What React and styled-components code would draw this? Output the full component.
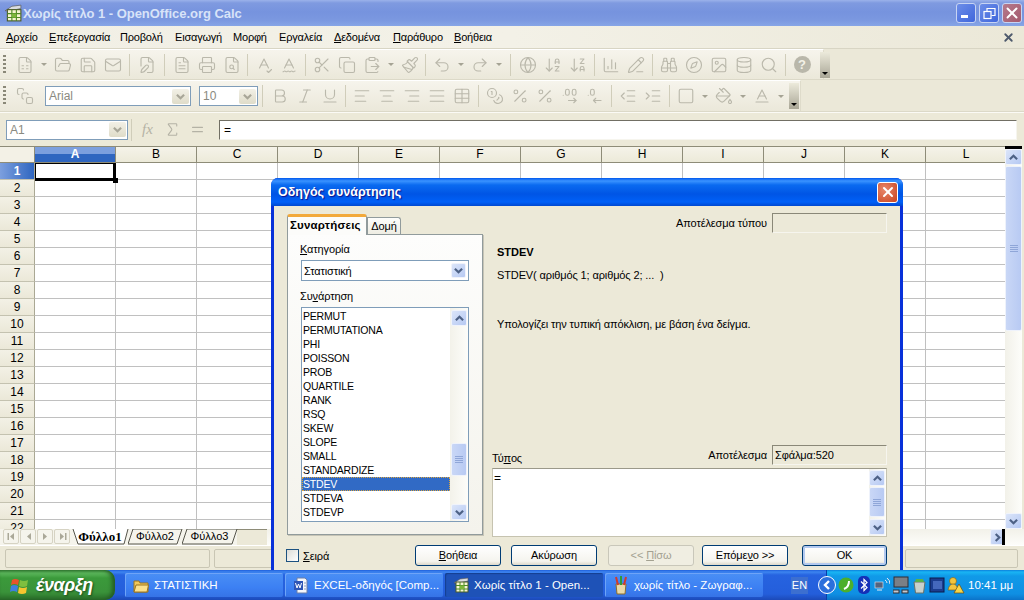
import styled, { createGlobalStyle } from "styled-components";
import {
  AlignCenter, AlignJustify, AlignLeft, AlignRight, ArrowDownAZ, ArrowDownZA, Baseline, Binoculars, Bold,
  ChartColumn, ClipboardPaste, Coins, Compass, Copy, Database, DecimalsArrowLeft, DecimalsArrowRight,
  FilePen, FileSearch, FileSpreadsheet, FileText, FolderOpen, Globe, Image, IndentDecrease, IndentIncrease,
  Italic, Mail, Paintbrush, PaintBucket, PencilLine, Percent, Printer, Redo2, Save, Scissors, Search,
  SpellCheck, SpellCheck2, Square, SquareStack, Table, Underline, Undo2, Sigma, Equal, X,
} from "lucide-react";

const ui = `"Liberation Sans", "Noto Sans", sans-serif`;
const dialogFont = `letter-spacing: -0.12px; font-family: ${ui}; font-size: 11px;`;

const GlobalStyle = createGlobalStyle`
  html, body { margin: 0; padding: 0; background: #ece9d8; }
  * { box-sizing: border-box; }
  body { font-family: ${ui}; font-size: 11px; color: #000; }
`;

const Screen = styled.div`
  position: relative;
  width: 1024px;
  height: 600px;
  overflow: hidden;
  display: flex;
  flex-direction: column;
`;

const AppWindow = styled.div`
  height: 570px;
  display: flex;
  flex-direction: column;
  background: #ece9d8;
`;

/* title bar */
const TitleBar = styled.div`
  height: 26px;
  flex: none;
  display: flex;
  align-items: center;
  padding: 0 2px 0 4px;
  background: linear-gradient(#9bb2ea 0, #7f9ae0 3px, #7693de 12px, #7b98e0 20px, #86a5e6 26px);
`;

const TitleText = styled.span`
  margin-left: 1px;
  flex: 1;
  font: bold 13px ${ui};
  letter-spacing: -0.03px;
  color: #d8e3f8;
  white-space: nowrap;
`;

const WinButton = styled.div`
  width: 20px;
  height: 20px;
  margin-left: 3px;
  border: 1px solid #c7d4f3;
  border-radius: 3px;
  display: flex;
  align-items: center;
  justify-content: center;
  color: #fff;
  background: ${(p) => (p.$close ? "linear-gradient(135deg,#b57a8c,#a55a6e)" : "linear-gradient(135deg,#6d8ee8,#3f66dc)")};
`;

/* menu */
const MenuBar = styled.div`
  height: 23px;
  flex: none;
  display: flex;
  align-items: center;
  padding: 0 6px;
  background: linear-gradient(90deg, #f1efe5, #f3f1e7 50%, #ebe8d8);
  border-bottom: 1px solid #d8d5c4;
`;

const MenuItem = styled.span`
  width: ${(p) => p.$w}px;
  flex: none;
  ${dialogFont}
  letter-spacing: -0.2px;
  white-space: nowrap;
  u { text-decoration-thickness: 1px; text-underline-offset: 1px; }
`;

const MenuClose = styled.div`
  margin-left: auto;
  margin-right: 3px;
  color: #4e5a6c;
  display: flex;
`;

/* toolbars */
const ToolRow = styled.div`
  height: ${(p) => p.$h}px;
  flex: none;
  display: flex;
  background: #ebe8d8;
  border-bottom: 1px solid #dcd9c8;
`;

const Toolbar = styled.div`
  width: ${(p) => p.$w}px;
  height: 100%;
  display: flex;
  align-items: center;
  padding-left: 3px;
  background: linear-gradient(#f6f4ec, #ebe8da);
  border-top: 1px solid #fff;
  border-right: 1px solid #dedbca;
`;

const Grip = styled.div`
  width: 3px;
  height: 20px;
  margin-right: 6px;
  flex: none;
  background: repeating-linear-gradient(#8a8878 0 2px, transparent 2px 4px);
`;

const Slot = styled.div`
  width: ${(p) => p.$w || 25}px;
  height: 24px;
  flex: none;
  display: flex;
  align-items: center;
  justify-content: center;
  color: #bab8ab;
`;

const DropArrow = styled.div`
  width: 0;
  height: 0;
  border-left: 3px solid transparent;
  border-right: 3px solid transparent;
  border-top: 3px solid #a5a394;
`;

const Sep = styled.div`
  width: ${(p) => p.$w || 8}px;
  height: 22px;
  flex: none;
  display: flex;
  justify-content: center;
  &::before { content: ""; width: 1px; background: #d0cdba; }
`;

const HelpIcon = styled.div`
  width: 17px;
  height: 17px;
  border-radius: 50%;
  background: #b9b7aa;
  color: #f3f1e7;
  font: bold 13px/17px ${ui};
  text-align: center;
`;

const Overflow = styled.div`
  width: 10px;
  height: 26px;
  flex: none;
  margin-left: ${(p) => p.$ml}px;
  display: flex;
  align-items: flex-end;
  justify-content: center;
  padding-bottom: 3px;
  background: linear-gradient(#eceadb, #a9a696);
  &::after {
    content: "";
    border-left: 3px solid transparent;
    border-right: 3px solid transparent;
    border-top: 3px solid #000;
  }
`;

const GreyCombo = styled.div`
  width: ${(p) => p.$w}px;
  height: ${(p) => p.$h || 20}px;
  margin-left: ${(p) => p.$ml || 0}px;
  flex: none;
  display: flex;
  align-items: center;
  padding-left: 3px;
  background: #fff;
  border: 1px solid #7f9db9;
  font-size: 12px;
  color: #8a8a80;
`;

const GreyComboArrow = styled.div`
  margin-left: auto;
  margin-right: 1px;
  width: 17px;
  height: 15px;
  background: linear-gradient(#f2f0e6, #dfdcc9);
  border-radius: 2px;
  display: flex;
  align-items: center;
  justify-content: center;
  color: #a8a698;
`;

/* formula bar */
const FormulaBar = styled.div`
  height: 34px;
  flex: none;
  display: flex;
  align-items: center;
  padding: 0 6px;
  border-top: 1px solid #fbfaf5;
`;

const FormulaInput = styled.div`
  width: 798px;
  height: 20px;
  flex: none;
  margin-left: 9px;
  padding-left: 4px;
  background: #fff;
  border: 1px solid #f6f5ee;
  border-top: 1px solid #716f64;
  border-left: 1px solid #716f64;
  font: 12px/19px ${ui};
`;

const FormulaTool = styled.div`
  width: 25px;
  flex: none;
  display: flex;
  justify-content: center;
  color: #b4b2a5;
`;

const FxText = styled.span`
  font: italic 15px/17px "Liberation Serif", serif;
  color: #b4b2a5;
`;

/* sheet */
const SheetArea = styled.div`
  height: 383px;
  flex: none;
  display: flex;
  padding-right: 2px;
`;

const Sheet = styled.div`
  width: 1005px;
  flex: none;
  overflow: hidden;
  background: #fff;
`;

const SheetRow = styled.div`
  display: flex;
  height: ${(p) => p.$h || 17}px;
`;

const HeadRow = styled(SheetRow)`
  border-top: 1px solid #8e8c78;
`;

const Corner = styled.div`
  width: 35px;
  flex: none;
  background: #f3f1e6;
  border-right: 1px solid #8e8c78;
  border-bottom: 1px solid #8e8c78;
`;

const ColHead = styled.div`
  width: 81px;
  flex: none;
  text-align: center;
  font: ${(p) => (p.$on ? "bold " : "")}12px/15px ${ui};
  color: ${(p) => (p.$on ? "#fff" : "#000")};
  background: ${(p) => (p.$on ? "linear-gradient(#7c9fde 0 45%, #2f66c0 45%)" : "linear-gradient(#f5f3e9, #ecead9)")};
  border-right: 1px solid #8e8c78;
  border-bottom: 1px solid #8e8c78;
`;

const RowHead = styled.div`
  width: 35px;
  flex: none;
  text-align: center;
  font: ${(p) => (p.$on ? "bold " : "")}12px/16px ${ui};
  color: ${(p) => (p.$on ? "#fff" : "#000")};
  background: ${(p) => (p.$on ? "linear-gradient(90deg,#7c9fde,#2f66c0)" : "linear-gradient(#f3f1e6, #ebe8d8)")};
  border-right: 1px solid #aaa894;
  border-bottom: 1px solid #c4c2b0;
`;

const Cell = styled.div`
  width: 81px;
  flex: none;
  border-right: 1px solid #c0c0c0;
  border-bottom: 1px solid #c0c0c0;
`;

const ActiveCell = styled.div`
  position: relative;
  width: 81px;
  flex: none;
  border: 1px solid #000;
  border-right-width: 3px;
  border-bottom-width: 3px;
  margin-bottom: -1px;
  &::after {
    content: "";
    position: absolute;
    right: -5px;
    bottom: -5px;
    width: 5px;
    height: 5px;
    background: #000;
  }
`;

const VScroll = styled.div`
  width: 17px;
  flex: none;
  display: flex;
  flex-direction: column;
  border-top: 3px solid #000;
  background: linear-gradient(90deg, #f2f1e9, #fdfdfa);
`;

const ScrollBtn = styled.div`
  width: ${(p) => p.$s || 16}px;
  height: ${(p) => p.$h || 16}px;
  flex: none;
  display: flex;
  align-items: center;
  justify-content: center;
  border: 1px solid #f0f3fb;
  border-radius: 2px;
  background: linear-gradient(135deg, #dbe5f9, #b6c9f3);
  color: #4d6185;
`;

const Thumb = styled.div`
  width: ${(p) => p.$s || 16}px;
  height: ${(p) => p.$h}px;
  flex: none;
  margin-top: ${(p) => p.$mt || 1}px;
  border: 1px solid #eef2fb;
  border-radius: 2px;
  background: linear-gradient(90deg, #c9d7f6, #b8caf3);
  display: flex;
  align-items: center;
  justify-content: center;
  &::after {
    content: "";
    width: 8px;
    height: 7px;
    background: repeating-linear-gradient(#8fa6d8 0 1px, transparent 1px 2px);
  }
`;

const ScrollFill = styled.div`
  flex: 1;
`;

/* sheet tabs */
const TabRow = styled.div`
  height: 17px;
  flex: none;
  display: flex;
  align-items: stretch;
  padding-left: 3px;
  background: #f5f4ec;
  border-bottom: 1px solid #fff;
`;

const NavBtn = styled.div`
  width: 16px;
  height: 15px;
  margin-right: 1px;
  flex: none;
  border: 1px solid #d6d3c3;
  border-radius: 2px;
  display: flex;
  align-items: center;
  justify-content: center;
  color: #aaa898;
`;

const SheetTab = styled.div`
  position: relative;
  width: ${(p) => p.$w}px;
  flex: none;
  margin-left: ${(p) => p.$ml || 0}px;
  text-align: center;
  font: ${(p) => (p.$on ? `bold 13px/15px "Liberation Serif", serif` : `11px/15px ${ui}`)};
  span { position: relative; }
  svg { position: absolute; left: 0; top: 0; }
`;

const TabFill = styled.div`
  width: 30px;
  flex: none;
  border-top: 1px solid #8e8c78;
  background: #ece9d8;
`;

const HScroll = styled.div`
  flex: 1;
  display: flex;
  justify-content: flex-end;
  padding-right: 19px;
  position: relative;
  background: linear-gradient(#f2f1e9, #fdfdfa);
`;

const BlackMark = styled.div`
  width: 3px;
  height: 16px;
  flex: none;
  position: absolute;
  right: 19px;
  top: 0;
  background: #000;
`;

const StatusBar = styled.div`
  flex: 1;
  display: flex;
  align-items: center;
  padding: 0 6px 0 5px;
  gap: 4px;
`;

const StatusBox = styled.div`
  width: ${(p) => p.$w}px;
  margin-left: ${(p) => p.$ml || 0}px;
  height: 19px;
  flex: none;
  border: 1px solid #c9c6b4;
  border-radius: 2px;
`;

/* dialog */
const Dialog = styled.div`
  position: absolute;
  left: 271px;
  top: 178px;
  width: 632px;
  height: 392px;
  z-index: 2;
  display: flex;
  flex-direction: column;
  background: #0831d9;
  border-radius: 7px 7px 0 0;
  overflow: hidden;
`;

const DialogTitle = styled.div`
  height: 28px;
  flex: none;
  display: flex;
  align-items: center;
  padding: 0 5px 0 7px;
  background: linear-gradient(#0058ee 0, #3a93ff 3px, #0a6af0 7px, #0055e5 16px, #0060f8 24px, #0048d0 28px);
`;

const DialogTitleText = styled.span`
  flex: 1;
  font: bold 12.5px ${ui};
  color: #fff;
  text-shadow: 1px 1px 1px #0f1089;
  white-space: nowrap;
`;

const DialogClose = styled.div`
  width: 21px;
  height: 21px;
  border: 1px solid #fff;
  border-radius: 3px;
  background: radial-gradient(circle at 35% 35%, #e8876a, #c8431f);
  color: #fff;
  display: flex;
  align-items: center;
  justify-content: center;
`;

const DialogBody = styled.div`
  flex: 1;
  margin: 0 3px;
  padding: 7px 13px 0;
  background: #ece9d8;
  display: flex;
  flex-direction: column;
`;

const DialogMain = styled.div`
  height: 324px;
  flex: none;
  display: flex;
  gap: 9px;
`;

const LeftCol = styled.div`
  width: 196px;
  flex: none;
  padding-top: 1px;
  display: flex;
  flex-direction: column;
`;

const Tabs = styled.div`
  display: flex;
  align-items: flex-end;
  height: 20px;
  flex: none;
`;

const TabActive = styled.div`
  width: 80px;
  height: 21px;
  position: relative;
  z-index: 1;
  margin-bottom: -1px;
  padding-left: 2px;
  background: #fcfcfa;
  border: 1px solid #919b9c;
  border-top: 3px solid #f2a93b;
  border-bottom: none;
  border-radius: 3px 3px 0 0;
  font: bold 11.5px/16px ${ui};
  letter-spacing: 0.2px;
  white-space: nowrap;
`;

const TabIdle = styled.div`
  width: 34px;
  height: 17px;
  text-align: center;
  background: linear-gradient(#fdfdfb, #eeede3);
  border: 1px solid #919b9c;
  border-bottom: none;
  border-radius: 0 3px 0 0;
  ${dialogFont}
  line-height: 17px;
`;

const TabPanel = styled.div`
  height: 301px;
  flex: none;
  padding: 7px 13px 0 13px;
  border: 1px solid #919b9c;
  background: linear-gradient(#fdfdfc, #f4f3ec);
  box-shadow: 1px 1px 0 #c6c4b6;
  display: flex;
  flex-direction: column;
`;

const FieldLabel = styled.div`
  height: 14px;
  flex: none;
  ${dialogFont}
  line-height: 14px;
  margin: ${(p) => p.$mt || 0}px 0 0 -1px;
`;

const Combo = styled.div`
  height: 21px;
  margin-top: 4px;
  flex: none;
  display: flex;
  align-items: center;
  padding: 0 2px;
  background: #fff;
  border: 1px solid #7f9db9;
  ${dialogFont}
  & > span { flex: 1; }
`;

const ListBox = styled.div`
  height: 215px;
  margin-top: 4px;
  flex: none;
  display: flex;
  background: #fff;
  border: 1px solid #7f9db9;
`;

const ListRows = styled.div`
  flex: 1;
  padding-top: 1px;
`;

const ListRow = styled.div`
  height: 14px;
  padding-left: 1px;
  font: 10.5px/14px ${ui};
  letter-spacing: -0.2px;
  color: ${(p) => (p.$on ? "#fff" : "#000")};
  background: ${(p) => (p.$on ? "#316ac5" : "transparent")};
  outline: ${(p) => (p.$on ? "1px dotted #d9a441" : "none")};
  outline-offset: -1px;
`;

const ListScroll = styled.div`
  width: 18px;
  flex: none;
  padding: 2px 1px 1px;
  display: flex;
  flex-direction: column;
  background: linear-gradient(90deg, #f3f2ea, #fdfdfa);
`;

const RightCol = styled.div`
  flex: 1;
  display: flex;
  flex-direction: column;
`;

const ResultRow = styled.div`
  display: flex;
  justify-content: flex-end;
  align-items: center;
  gap: 5px;
  height: 20px;
  flex: none;
  ${dialogFont}
`;

const ResultBox = styled.div`
  width: 115px;
  height: 20px;
  flex: none;
  padding-left: 2px;
  border: 1px solid #f6f5ee;
  border-top: 1px solid #8a8878;
  border-left: 1px solid #8a8878;
  background: #ece9d8;
  ${dialogFont}
  line-height: 18px;
`;

const FnName = styled.div`
  margin: 12px 0 0 5px;
  font: bold 11px/14px ${ui};
`;

const FnText = styled.div`
  margin: ${(p) => p.$mt}px 0 0 5px;
  ${dialogFont}
  line-height: 14px;
  white-space: pre;
`;

const FormulaHead = styled(ResultRow)`
  margin-top: auto;
  & > label { margin-right: auto; padding-top: 6px; line-height: 14px; }
`;

const FormulaBox = styled.div`
  height: 69px;
  margin-top: 3px;
  flex: none;
  display: flex;
  background: #fff;
  border: 1px solid #c6c3b0;
  border-top: 1px solid #9b998a;
  font: 12px/16px ${ui};
  & > span { flex: 1; padding: 1px 0 0 1px; }
`;

const FormulaScroll = styled.div`
  width: 17px;
  flex: none;
  padding: 1px 1px 1px 0;
  display: flex;
  flex-direction: column;
  background: linear-gradient(90deg, #f3f2ea, #fdfdfa);
`;

const Footer = styled.div`
  flex: none;
  margin: 8px 0 0 -1px;
  display: flex;
  align-items: center;
`;

const CheckBox = styled.div`
  width: 13px;
  height: 13px;
  flex: none;
  border: 1px solid #1c5180;
  background: linear-gradient(135deg, #dcdcd7, #fff);
`;

const CheckLabel = styled.span`
  width: 116px;
  flex: none;
  padding-left: 4px;
  ${dialogFont}
`;

const Button = styled.div`
  width: ${(p) => p.$w || 86}px;
  margin-left: ${(p) => p.$ml || 0}px;
  height: 21px;
  flex: none;
  text-align: center;
  border: 1px solid ${(p) => (p.$off ? "#c9c7ba" : "#003c74")};
  border-radius: 3px;
  background: ${(p) => (p.$off ? "#f0eee2" : "linear-gradient(#fff, #f5f4ee 80%, #dcd8ca)")};
  color: ${(p) => (p.$off ? "#a3a191" : "#000")};
  box-shadow: ${(p) => (p.$main ? "inset 0 0 0 2px #b3c9ef" : "none")};
  ${dialogFont}
  line-height: 19px;
`;

/* taskbar */
const Taskbar = styled.div`
  position: relative;
  z-index: 3;
  height: 30px;
  flex: none;
  display: flex;
  align-items: center;
  background: linear-gradient(#1f5fdc 0, #3d85f0 2px, #2663e0 5px, #245edb 24px, #1c49b8 30px);
`;

const StartButton = styled.div`
  width: 115px;
  height: 30px;
  flex: none;
  display: flex;
  align-items: center;
  gap: 6px;
  padding-left: 10px;
  margin-right: 10px;
  border-radius: 0 10px 10px 0;
  background: linear-gradient(#3c8f3c 0, #5cb85c 3px, #3b9a3b 8px, #3a933a 22px, #2a6f2a 30px);
  box-shadow: inset -3px 0 4px #245b24;
`;

const StartText = styled.span`
  font: italic bold 18px ${ui};
  letter-spacing: -0.5px;
  color: #fff;
  text-shadow: 1px 1px 2px #1b4a1b;
`;

const TaskButton = styled.div`
  width: ${(p) => p.$w || 158}px;
  height: 24px;
  margin-right: 2px;
  flex: none;
  display: flex;
  align-items: center;
  gap: 5px;
  padding-left: 8px;
  border-radius: 2px;
  background: ${(p) => (p.$on ? "#1e52b7" : "linear-gradient(#4a8ff5, #3c80f3 60%, #3673e6)")};
  box-shadow: ${(p) => (p.$on ? "inset 1px 1px 1px #143f8f" : "inset 1px 1px 0 #6ea4f8")};
  color: #fff;
  font: 11.5px ${ui};
  white-space: nowrap;
`;

const Lang = styled.div`
  margin-left: 26px;
  width: 17px;
  height: 17px;
  flex: none;
  background: #3c6fd0;
  color: #fff;
  font: 11px/17px ${ui};
  text-align: center;
`;

const Tray = styled.div`
  margin-left: 18px;
  flex: 1;
  height: 30px;
  display: flex;
  align-items: center;
  background: linear-gradient(#0c7fdc 0, #19b5f4 2px, #109ae8 6px, #0f8fe3 24px, #0b73c9 30px);
  border-left: 1px solid #0b3ea8;
`;

const TrayBack = styled.div`
  width: 18px;
  height: 18px;
  margin-left: -9px;
  flex: none;
  border: 1px solid #fff;
  border-radius: 50%;
  background: #2b6fdc;
  color: #fff;
  display: flex;
  align-items: center;
  justify-content: center;
`;

const TrayIcon = styled.div`
  width: ${(p) => p.$w || 18}px;
  flex: none;
  display: flex;
  justify-content: center;
`;

const Clock = styled.span`
  margin-left: 2px;
  color: #fff;
  font: 11.5px ${ui};
  white-space: nowrap;
`;

const chevronPaths = {
  up: "M1 7l4-4 4 4",
  down: "M1 3l4 4 4-4",
  right: "M3 1l4 4-4 4",
  left: "M7 1L3 5l4 4",
};

const Chevron = ({ dir = "down", size = 9 }) => (
  <svg width={size} height={size} viewBox="0 0 10 10" fill="none" stroke="currentColor" strokeWidth="2.4">
    <path d={chevronPaths[dir]} />
  </svg>
);

// sheet navigation: first, previous, next, last
const NavGlyph = ({ flip = false, bar = false }) => (
  <svg width="9" height="9" viewBox="0 0 9 9" fill="currentColor" style={flip ? { transform: "scaleX(-1)" } : undefined}>
    <path d="M7 1v7L3 4.500z" />
    {bar ? <rect x="0.500" y="1" width="1.500" height="7" /> : null}
  </svg>
);

const DocGlyph = () => (
  <svg width="16" height="17" viewBox="0 0 16 17">
    <path d="M4 1h8l2 2v13H4z" fill="#f4f6fb" stroke="#6b7fa8" />
    <rect x="1" y="4" width="9" height="9" fill="#2e55b5" />
    <path d="M2.500 6l1.500 5 1.500-4 1.500 4 1.500-5" fill="none" stroke="#fff" />
    <path d="M11 6h2M11 9h2M11 12h2" stroke="#8ea0c4" />
  </svg>
);

const CalcGlyph = ({ size = 16 }) => (
  <svg width={size} height={size} viewBox="0 0 16 16">
    <path d="M1 6l6-4 8-1v3L6 6z" fill="#d9dce0" stroke="#555" strokeWidth=".6" />
    <rect x="3" y="5" width="12" height="10" fill="#f5f5cf" stroke="#4c5a2a" />
    <path d="M3 8.500h12M3 12h12M7 5v10M11 5v10" stroke="#4d8a22" />
    <rect x="7" y="8.500" width="4" height="3.500" fill="#7db83a" />
  </svg>
);

const FolderGlyph = () => (
  <svg width="16" height="15" viewBox="0 0 16 15">
    <path d="M1 3h5l1 2h8v9H1z" fill="#f1c75a" stroke="#9a7420" />
    <path d="M1 14l2-7h12.500L14 14z" fill="#fbe08c" stroke="#9a7420" />
  </svg>
);

const PaintGlyph = () => (
  <svg width="16" height="19" viewBox="0 0 16 19">
    <path d="M3 8h10l-1 10H4z" fill="#e9d9a8" stroke="#8c6d2a" />
    <path d="M5 9L3 1M11 9l2-8" strokeWidth="2" fill="none" stroke="#d33a2a" />
    <path d="M8 9V0" strokeWidth="2" stroke="#2f9a3a" />
  </svg>
);

const FlagGlyph = () => (
  <svg width="20" height="20" viewBox="0 0 20 20">
    <path d="M2 5q3-2 7 0l-1 5q-4-2-7 0z" fill="#e8532b" />
    <path d="M10 5q4 2 8 0l-1 6q-4 2-8 0z" fill="#7fbf3f" />
    <path d="M1 11q3-2 7 0l-1 6q-4-2-7 0z" fill="#3f7fe0" />
    <path d="M9 12q4 2 8 0l-1 6q-4 2-8 0z" fill="#f5c52f" />
  </svg>
);

const TrayGlyphs = {
  green: (
    <svg width="16" height="16" viewBox="0 0 16 16">
      <circle cx="8" cy="8" r="7.500" fill="#4caf2c" />
      <path d="M11 4q0 6-5 8" fill="none" stroke="#fff" strokeWidth="2" />
    </svg>
  ),
  bluetooth: (
    <svg width="12" height="18" viewBox="0 0 12 18">
      <rect width="12" height="18" rx="5" fill="#1430b8" />
      <path d="M3 5.500l6 6-3 3v-11l3 3-6 6" fill="none" stroke="#fff" strokeWidth="1.200" />
    </svg>
  ),
  network: (
    <svg width="16" height="16" viewBox="0 0 16 16">
      <rect x="1" y="5" width="8" height="6" fill="#54647f" stroke="#e6ebf5" strokeWidth=".6" />
      <path d="M3 13h5M11 3q2 1 2 3M13 1q3 2 3 6" fill="none" stroke="#e6ebf5" />
    </svg>
  ),
  monitor: (
    <svg width="16" height="18" viewBox="0 0 16 18">
      <rect x="1" y="1" width="14" height="10" fill="#7a7f86" stroke="#2c2f36" />
      <rect x="0" y="14" width="6" height="3" fill="#c5c8ce" stroke="#2c2f36" />
      <rect x="9" y="14" width="6" height="3" fill="#c5c8ce" stroke="#2c2f36" />
    </svg>
  ),
  bin: (
    <svg width="15" height="17" viewBox="0 0 15 17">
      <path d="M2 5h11l-1.500 11h-8z" fill="#c9d1cc" stroke="#66706a" />
      <path d="M4 2h7l1 3H3z" fill="#5ab04a" />
    </svg>
  ),
  chip: (
    <svg width="16" height="16" viewBox="0 0 16 16">
      <rect x="1" y="1" width="14" height="14" fill="#1b3d8f" stroke="#0a1c4c" />
      <rect x="4" y="4" width="9" height="8" fill="#4468bc" />
    </svg>
  ),
  warn: (
    <svg width="18" height="18" viewBox="0 0 18 18">
      <circle cx="6" cy="5" r="3.500" fill="#f2c53d" stroke="#7a5a10" strokeWidth=".6" />
      <path d="M1 14q1-6 5-6t5 6z" fill="#f2c53d" stroke="#7a5a10" strokeWidth=".6" />
      <path d="M12 8l5 9H7z" fill="#f7d548" stroke="#6a4c0c" strokeWidth=".7" />
    </svg>
  ),
};

const sz = { size: 18, strokeWidth: 1.5 };

const toolbarOne = [
  ["i", FileSpreadsheet], ["d"], ["i", FolderOpen], ["i", Save], ["i", Mail], ["s", 9], ["i", FilePen], ["s", 10],
  ["i", FileText], ["i", Printer], ["i", FileSearch], ["s", 7], ["i", SpellCheck], ["i", SpellCheck2], ["s", 8],
  ["i", Scissors], ["i", Copy], ["i", ClipboardPaste], ["d"], ["i", Paintbrush], ["s", 7], ["i", Undo2], ["d"],
  ["i", Redo2], ["d"], ["s", 10], ["i", Globe], ["i", ArrowDownAZ], ["i", ArrowDownZA], ["s", 8], ["i", ChartColumn],
  ["i", PencilLine], ["s", 8], ["i", Binoculars], ["i", Compass], ["i", Image], ["i", Database], ["i", Search], ["s", 8],
];

const toolbarTwo = [
  ["i", Bold], ["i", Italic], ["i", Underline], ["s", 7], ["i", AlignLeft], ["i", AlignCenter], ["i", AlignRight],
  ["i", AlignJustify], ["i", Table], ["s", 8], ["i", Coins], ["i", Percent], ["i", Percent], ["i", DecimalsArrowRight],
  ["i", DecimalsArrowLeft], ["s", 8], ["i", IndentDecrease], ["i", IndentIncrease], ["s", 8], ["i", Square], ["d"],
  ["i", PaintBucket], ["d"], ["i", Baseline], ["d"],
];

const renderTools = (items) =>
  items.map(([kind, arg], i) => {
    if (kind === "s") return <Sep key={i} $w={arg} />;
    if (kind === "d") return <Slot key={i} $w={13}><DropArrow /></Slot>;
    const Icon = arg;
    return <Slot key={i}><Icon {...sz} /></Slot>;
  });

const menus = [
  ["Α", "ρχείο", 43], ["Ε", "πεξεργασία", 71], ["", "Προβολή", 55], ["", "Εισαγωγή", 58], ["", "Μορφή", 46],
  ["", "Εργαλεία", 55], ["Δ", "εδομένα", 59], ["Π", "αράθυρο", 61], ["Β", "οήθεια", 50],
];

const columns = ["A", "B", "C", "D", "E", "F", "G", "H", "I", "J", "K", "L"];
const rows = Array.from({ length: 22 }, (_, i) => i + 1);
const functions = ["PERMUT", "PERMUTATIONA", "PHI", "POISSON", "PROB", "QUARTILE", "RANK", "RSQ", "SKEW", "SLOPE", "SMALL", "STANDARDIZE", "STDEV", "STDEVA", "STDEVP"];

function TabShape({ w, on }) {
  return (
    <svg width={w + 6} height="17" viewBox={`0 0 ${w + 6} 17`}>
      <path
        d={on ? `M1 0L6 15H${w - 4}L${w} 0` : `M0 15H${w - 5}L${w} 0H5L0 15`}
        fill={on ? "#fff" : "none"}
        stroke="#55544a"
      />
    </svg>
  );
}

export default function App() {
  return (
    <Screen>
      <GlobalStyle />
      <AppWindow>
        <TitleBar>
          <CalcGlyph size={18} />
          <TitleText>Χωρίς τίτλο 1 - OpenOffice.org Calc</TitleText>
          <WinButton>
            <svg width="12" height="12" viewBox="0 0 12 12"><rect x="1" y="8" width="7" height="3" fill="#fff" /></svg>
          </WinButton>
          <WinButton>
            <svg width="13" height="13" viewBox="0 0 13 13" fill="none" stroke="#fff" strokeWidth="1.200">
              <rect x="1" y="4.500" width="7" height="7" /><path d="M4 4V1.500h8v7H8.500" />
            </svg>
          </WinButton>
          <WinButton $close><X size={18} strokeWidth={2.6} /></WinButton>
        </TitleBar>

        <MenuBar>
          {menus.map(([first, rest, w]) => (
            <MenuItem key={rest} $w={w}>
              {first ? <u>{first}</u> : null}{rest}
            </MenuItem>
          ))}
          <MenuClose><X size={13} strokeWidth={3.4} /></MenuClose>
        </MenuBar>

        <ToolRow $h={31}>
          <Toolbar $w={824}>
            <Grip />
            {renderTools(toolbarOne)}
            <Slot $w={26}><HelpIcon>?</HelpIcon></Slot>
            <Overflow $ml={5} />
          </Toolbar>
        </ToolRow>

        <ToolRow $h={32}>
          <Toolbar $w={801}>
            <Grip />
            <Slot $w={25}><SquareStack {...sz} /></Slot>
            <GreyCombo $w={146} $ml={8}>Arial<GreyComboArrow><Chevron /></GreyComboArrow></GreyCombo>
            <GreyCombo $w={59} $ml={8}>10<GreyComboArrow><Chevron /></GreyComboArrow></GreyCombo>
            <Sep $w={9} />
            {renderTools(toolbarTwo)}
            <Overflow $ml={2} />
          </Toolbar>
        </ToolRow>

        <FormulaBar>
          <GreyCombo $w={122}>A1<GreyComboArrow><Chevron /></GreyComboArrow></GreyCombo>
          <Sep $w={7} />
          <FormulaTool><FxText>fx</FxText></FormulaTool>
          <FormulaTool><Sigma size={17} strokeWidth={1.5} /></FormulaTool>
          <FormulaTool><Equal size={17} strokeWidth={1.5} /></FormulaTool>
          <FormulaInput>=</FormulaInput>
        </FormulaBar>

        <SheetArea>
          <Sheet>
            <HeadRow $h={17}>
              <Corner />
              {columns.map((c) => <ColHead key={c} $on={c === "A"}>{c}</ColHead>)}
            </HeadRow>
            {rows.map((r) => (
              <SheetRow key={r}>
                <RowHead $on={r === 1}>{r}</RowHead>
                {columns.map((c) =>
                  r === 1 && c === "A" ? <ActiveCell key={c} /> : <Cell key={c} />
                )}
              </SheetRow>
            ))}
          </Sheet>
          <VScroll>
            <ScrollBtn $s={17}><Chevron dir="up" /></ScrollBtn>
            <Thumb $s={17} $h={165} />
            <ScrollFill />
            <ScrollBtn $s={17}><Chevron /></ScrollBtn>
          </VScroll>
        </SheetArea>

        <TabRow>
          <NavBtn><NavGlyph bar /></NavBtn>
          <NavBtn><NavGlyph /></NavBtn>
          <NavBtn><NavGlyph flip /></NavBtn>
          <NavBtn><NavGlyph flip bar /></NavBtn>
          <SheetTab $w={56} $ml={1} $on><TabShape w={56} on /><span>Φύλλο1</span></SheetTab>
          <SheetTab $w={54}><TabShape w={54} /><span>Φύλλο2</span></SheetTab>
          <SheetTab $w={55}><TabShape w={55} /><span>Φύλλο3</span></SheetTab>
          <TabFill />
          <HScroll>
            <ScrollBtn $s={15} $h={16}><Chevron dir="right" /></ScrollBtn>
            <BlackMark />
          </HScroll>
        </TabRow>

        <StatusBar>
          <StatusBox $w={205} />
          <StatusBox $w={60} />
          <StatusBox $w={113} $ml={627} />
        </StatusBar>
      </AppWindow>

      <Dialog>
        <DialogTitle>
          <DialogTitleText>Οδηγός συνάρτησης</DialogTitleText>
          <DialogClose><X size={16} strokeWidth={3} /></DialogClose>
        </DialogTitle>
        <DialogBody>
          <DialogMain>
            <LeftCol>
              <Tabs>
                <TabActive>Συναρτήσεις</TabActive>
                <TabIdle>Δομή</TabIdle>
              </Tabs>
              <TabPanel>
                <FieldLabel><u>Κ</u>ατηγορία</FieldLabel>
                <Combo>
                  <span>Στατιστική</span>
                  <ScrollBtn $s={15} $h={15}><Chevron /></ScrollBtn>
                </Combo>
                <FieldLabel $mt={8}>Συ<u>ν</u>άρτηση</FieldLabel>
                <ListBox>
                  <ListRows>
                    {functions.map((f) => <ListRow key={f} $on={f === "STDEV"}>{f}</ListRow>)}
                  </ListRows>
                  <ListScroll>
                    <ScrollBtn><Chevron dir="up" /></ScrollBtn>
                    <Thumb $h={33} $mt={117} />
                    <ScrollFill />
                    <ScrollBtn><Chevron /></ScrollBtn>
                  </ListScroll>
                </ListBox>
              </TabPanel>
            </LeftCol>
            <RightCol>
              <ResultRow>
                <span>Αποτέλεσμα τύπου</span>
                <ResultBox />
              </ResultRow>
              <FnName>STDEV</FnName>
              <FnText $mt={9}>{"STDEV( αριθμός 1; αριθμός 2; ...  )"}</FnText>
              <FnText $mt={35}>Υπολογίζει την τυπική απόκλιση, με βάση ένα δείγμα.</FnText>
              <FormulaHead>
                <label>Τύ<u>π</u>ος</label>
                <span>Αποτέλεσμα</span>
                <ResultBox>Σφάλμα:520</ResultBox>
              </FormulaHead>
              <FormulaBox>
                <span>=</span>
                <FormulaScroll>
                  <ScrollBtn><Chevron dir="up" /></ScrollBtn>
                  <Thumb $h={30} />
                  <ScrollFill />
                  <ScrollBtn><Chevron /></ScrollBtn>
                </FormulaScroll>
              </FormulaBox>
            </RightCol>
          </DialogMain>
          <Footer>
            <CheckBox />
            <CheckLabel><u>Σ</u>ειρά</CheckLabel>
            <Button><u>Β</u>οήθεια</Button>
            <Button $ml={10}>Ακύρωση</Button>
            <Button $ml={11} $off>{"<< "}<u>Π</u>ίσω</Button>
            <Button $ml={8}>Επόμε<u>ν</u>ο {">>"}</Button>
            <Button $ml={14} $w={85} $main>OK</Button>
          </Footer>
        </DialogBody>
      </Dialog>

      <Taskbar>
        <StartButton><FlagGlyph /><StartText>έναρξη</StartText></StartButton>
        <TaskButton><FolderGlyph />ΣΤΑΤΙΣΤΙΚΗ</TaskButton>
        <TaskButton><DocGlyph />EXCEL-οδηγός [Comp...</TaskButton>
        <TaskButton $on><CalcGlyph />Χωρίς τίτλο 1 - Open...</TaskButton>
        <TaskButton><PaintGlyph />χωρίς τίτλο - Ζωγραφ...</TaskButton>
        <Lang>EN</Lang>
        <Tray>
          <TrayBack><Chevron dir="left" size={10} /></TrayBack>
          <TrayIcon $w={20}>{TrayGlyphs.green}</TrayIcon>
          <TrayIcon $w={16}>{TrayGlyphs.bluetooth}</TrayIcon>
          <TrayIcon $w={19}>{TrayGlyphs.network}</TrayIcon>
          <TrayIcon $w={19}>{TrayGlyphs.monitor}</TrayIcon>
          <TrayIcon>{TrayGlyphs.bin}</TrayIcon>
          <TrayIcon>{TrayGlyphs.chip}</TrayIcon>
          <TrayIcon $w={20}>{TrayGlyphs.warn}</TrayIcon>
          <Clock>10:41 μμ</Clock>
        </Tray>
      </Taskbar>
    </Screen>
  );
}
